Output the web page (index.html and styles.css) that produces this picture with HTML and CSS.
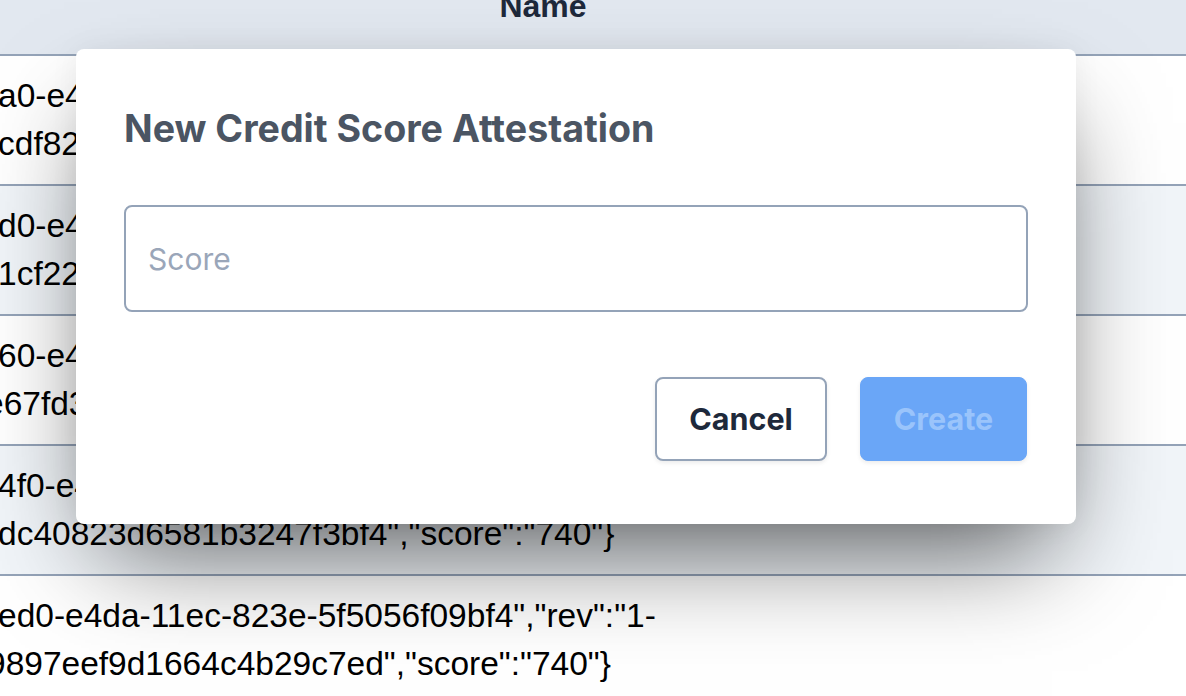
FILE: index.html
```html
<!DOCTYPE html>
<html lang="en">
<head>
<meta charset="utf-8">
<title>Credit Score Attestations</title>
<link rel="stylesheet" href="styles.css">
</head>
<body>
<div class="page">
  <table class="grid">
    <thead>
      <tr><th class="head-cell">Name</th></tr>
    </thead>
    <tbody>
      <tr class="row"><td class="cell"><span class="ln">a0-e4da-11ec-823e-5f5056f09bf4","rev":"1-</span><br><span class="ln">cdf8257a0e4c1d9b3a6f5e","score":"740"}</span></td></tr>
      <tr class="row alt"><td class="cell"><span class="ln">d0-e4da-11ec-823e-5f5056f09bf4","rev":"1-</span><br><span class="ln">1cf22a8e3b0d7c6f1e94b2","score":"740"}</span></td></tr>
      <tr class="row"><td class="cell"><span class="ln">60-e4da-11ec-823e-5f5056f09bf4","rev":"1-</span><br><span class="ln s3">e67fd3c9b5e2a1d4f8c07","score":"740"}</span></td></tr>
      <tr class="row alt"><td class="cell"><span class="ln">4f0-e4da-11ec-823e-5f5056f09bf4","rev":"1-</span><br><span class="ln">dc40823d6581b3247f3bf4","score":"740"}</span></td></tr>
      <tr class="row"><td class="cell"><span class="ln">ed0-e4da-11ec-823e-5f5056f09bf4","rev":"1-</span><br><span class="ln s5">9897eef9d1664c4b29c7ed","score":"740"}</span></td></tr>
    </tbody>
  </table>
</div>

<div class="modal">
  <h2 class="modal-title">New Credit Score Attestation</h2>
  <input class="field" type="text" placeholder="Score">
  <div class="actions">
    <button class="btn btn-cancel" type="button">Cancel</button>
    <button class="btn btn-create" type="button" disabled>Create</button>
  </div>
</div>
</body>
</html>
```

FILE: styles.css
```css
html, body {
  margin: 0;
  padding: 0;
  background: #ffffff;
  overflow: hidden;
  width: 1186px;
  height: 696px;
}

.page {
  margin-top: -18px;
  overflow: hidden;
  width: 1186px;
}

.grid {
  width: 100%;
  border-collapse: collapse;
  font-family: "Liberation Sans", Arial, sans-serif;
  font-size: 33.5px;
  line-height: 48px;
  color: #000000;
}

.head-cell {
  background: #e2e8f0;
  color: #1e293b;
  font-weight: 700;
  font-size: 32px;
  text-align: center;
  padding: 0 100px 24px 0;
  border-bottom: 2px solid #94a3b8;
}

.row {
  background: #ffffff;
}

.row.alt {
  background: #f1f5f9;
}

.cell {
  padding: 16px 0;
  height: 96px;
  border-bottom: 2px solid #94a3b8;
  white-space: nowrap;
  text-align: left;
}

.ln {
  display: inline-block;
  margin-left: -2px;
}

.ln.s3 {
  margin-left: -15px;
}

.ln.s5 {
  margin-left: -13px;
}

.modal {
  position: absolute;
  left: 76px;
  top: 49px;
  width: 1000px;
  height: 475px;
  box-sizing: border-box;
  padding: 52px 48px 0 48px;
  background: #ffffff;
  border-radius: 8px;
  box-shadow: 0 50px 100px -24px rgba(0, 0, 0, 0.62), 0 0 30px rgba(0, 0, 0, 0.05);
  font-family: Inter, "Noto Sans", sans-serif;
}

.modal-title {
  margin: 0;
  font-size: 37.6px;
  line-height: 56px;
  font-weight: 700;
  color: #4b5563;
}

.field {
  display: block;
  box-sizing: border-box;
  width: 904px;
  height: 107px;
  margin-top: 48px;
  padding: 0 22px;
  border: 2px solid #94a3b8;
  border-radius: 8px;
  font-family: Inter, "Noto Sans", sans-serif;
  font-size: 30px;
  color: #1e293b;
  background: #ffffff;
  outline: none;
}

.field::placeholder {
  color: #9aa6b9;
}

.actions {
  display: flex;
  justify-content: flex-end;
  gap: 33px;
  margin-top: 65px;
}

.btn {
  box-sizing: border-box;
  height: 84px;
  padding: 0;
  border-radius: 8px;
  font-family: Inter, "Noto Sans", sans-serif;
  font-size: 30.5px;
  font-weight: 700;
  line-height: 48px;
  box-shadow: 0 2px 4px rgba(0, 0, 0, 0.08);
  cursor: pointer;
}

.btn-cancel {
  width: 172px;
  background: #ffffff;
  border: 2px solid #94a3b8;
  color: #1e293b;
}

.btn-create {
  width: 167px;
  margin-right: 1px;
  background: #6aa6f7;
  border: 1px solid #6aa6f7;
  color: #9ac4fb;
}
```
